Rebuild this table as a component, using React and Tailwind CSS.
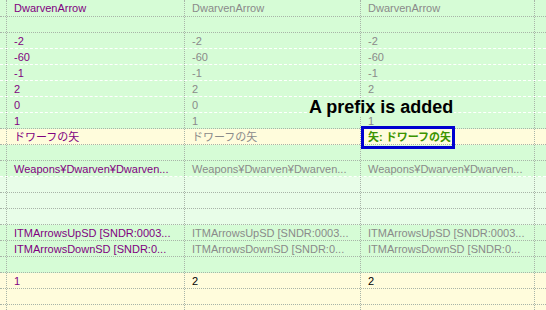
import React from "react";

const G = "bg-[#d6fcd6]";
const L = "bg-[#e8fde8]";
const Y = "bg-[#fffcdc]";

const rows = [
  { h: "h-[17px]", bg: G, c: ["DwarvenArrow", "DwarvenArrow", "DwarvenArrow"], line: "g" },
  { bg: G, c: ["", "", ""], line: "g" },
  { bg: G, c: ["-2", "-2", "-2"], line: "w" },
  { bg: G, c: ["-60", "-60", "-60"], line: "w" },
  { bg: G, c: ["-1", "-1", "-1"], line: "w" },
  { bg: G, c: ["2", "2", "2"], line: "w" },
  { bg: G, c: ["0", "0", "0"], line: "w" },
  { bg: G, c: ["1", "1", "1"], line: "g" },
  { bg: Y, c: ["ドワーフの矢", "ドワーフの矢", "矢: ドワーフの矢"], line: "g", special: true },
  { bg: G, c: ["", "", ""], line: "g" },
  { bg: G, c: ["Weapons¥Dwarven¥Dwarven...", "Weapons¥Dwarven¥Dwarven...", "Weapons¥Dwarven¥Dwarven..."], line: "w" },
  { bg: L, c: ["", "", ""], line: "g" },
  { bg: L, c: ["", "", ""], line: "g" },
  { bg: L, c: ["", "", ""], line: "g" },
  { bg: G, c: ["ITMArrowsUpSD [SNDR:0003...", "ITMArrowsUpSD [SNDR:0003...", "ITMArrowsUpSD [SNDR:0003..."], line: "g" },
  { bg: G, c: ["ITMArrowsDownSD [SNDR:0...", "ITMArrowsDownSD [SNDR:0...", "ITMArrowsDownSD [SNDR:0..."], line: "g" },
  { bg: G, c: ["", "", ""], line: "g" },
  { bg: Y, c: ["1", "2", "2"], line: "g", dark: true },
  { bg: Y, c: ["", "", ""], line: "g" },
  { bg: Y, c: ["", "", ""], line: "g" },
];

function Row({ r }) {
  const lineCls =
    r.line === "w"
      ? "border-b border-dashed border-[#ffffff]"
      : "border-b border-dotted border-[#a8b4a8]";
  const colors = r.dark
    ? ["text-[#800080]", "text-[#000000]", "text-[#000000]"]
    : ["text-[#800080]", "text-[#8a8a8a]", "text-[#8a8a8a]"];
  return (
    <div className={`grid grid-cols-[7px_178px_176px_174px_1fr] ${r.h || "h-[16px]"} ${r.bg} ${lineCls}`}>
      <div className="border-r border-dotted border-[#a8b4a8]" />
      {r.c.map((t, i) => (
        <div
          key={i}
          className={`border-r border-dotted border-[#a8b4a8] pl-[7px] pt-[1px] overflow-hidden whitespace-nowrap leading-[14px] ${
            r.special && i === 2 ? "text-[#3c9400] font-semibold" : colors[i]
          }`}
        >
          {t}
        </div>
      ))}
      <div />
    </div>
  );
}

export default function App() {
  return (
    <div className="relative w-[546px] h-[310px] overflow-hidden bg-[#fffcdc] font-['Liberation_Sans','Noto_Sans_CJK_JP',sans-serif] text-[11px]">
      <div className="flex flex-col">
        {rows.map((r, i) => (
          <Row key={i} r={r} />
        ))}
      </div>
      <div className="absolute left-[308px] top-[98px] bg-[#d6fcd6] px-[1px] text-[18px] font-bold text-black leading-[18px] font-['Liberation_Sans',sans-serif]">
        A prefix is added
      </div>
      <div className="absolute left-[361px] top-[126px] w-[94px] h-[23px] border-[3px] border-[#0000d0]" />
    </div>
  );
}
